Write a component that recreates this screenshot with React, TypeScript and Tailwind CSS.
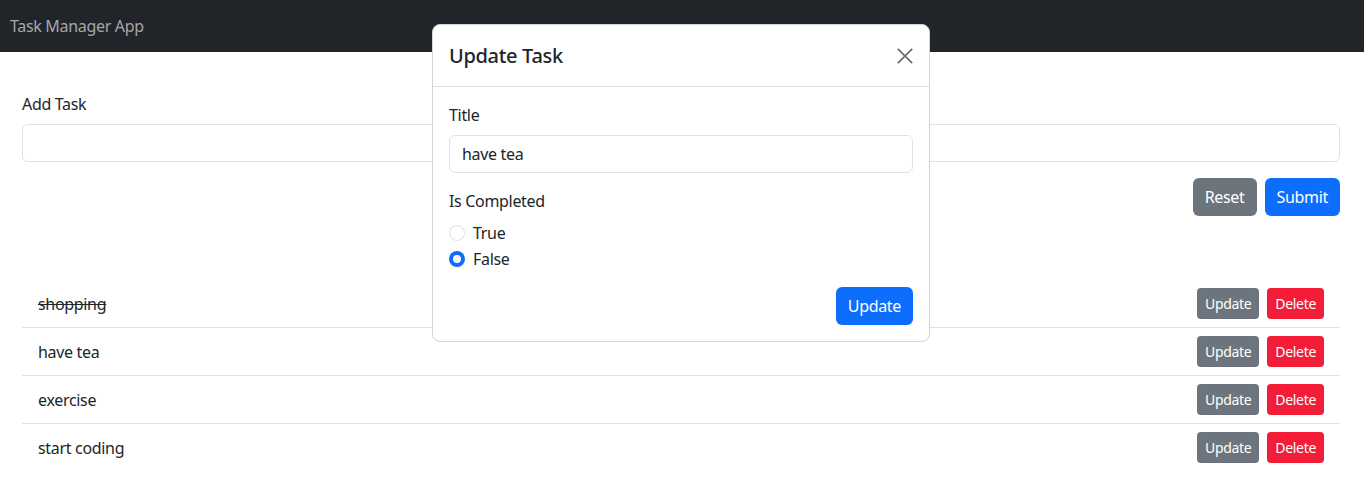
const font = { fontFamily: '"Noto Sans", "Open Sans", sans-serif' };

const tasks = [
  { title: "shopping", done: true },
  { title: "have tea", done: false },
  { title: "exercise", done: false },
  { title: "start coding", done: false },
];

function Radio({ checked, label }: { checked: boolean; label: string }) {
  return (
    <label className="flex h-6 items-center gap-2 text-[16px] text-[#212529]">
      {checked ? (
        <span className="flex h-4 w-4 items-center justify-center rounded-full bg-[#0d6efd]">
          <span className="h-2 w-2 rounded-full bg-white" />
        </span>
      ) : (
        <span className="h-4 w-4 rounded-full border border-[#dee2e6] bg-white" />
      )}
      {label}
    </label>
  );
}

function UpdateModal() {
  return (
    <div className="absolute left-[432px] top-[24px] w-[498px] rounded-lg border border-[#d3d4d6] bg-white">
      <div className="flex h-[62px] items-center justify-between border-b border-[#dee2e6] px-4">
        <h2 className="text-[20px] font-medium text-[#212529]">Update Task</h2>
        <button type="button" aria-label="Close" className="flex h-4 w-4 items-center justify-center">
          <svg viewBox="0 0 16 16" className="h-4 w-4" fill="none" stroke="#6b6e71" strokeWidth={1.7}>
            <path d="M0.8 0.8l14.4 14.4M15.2 0.8l-14.4 14.4" />
          </svg>
        </button>
      </div>
      <div className="p-4">
        <div className="mb-2 leading-6 text-[#212529]">Title</div>
        <input
          readOnly
          value="have tea"
          className="h-[38px] w-full rounded-md border border-[#dee2e6] px-3 text-[16px] text-[#212529] outline-none"
        />
        <div className="mt-4 mb-2 leading-6 text-[#212529]">Is Completed</div>
        <div className="flex flex-col gap-0.5">
          <Radio checked={false} label="True" />
          <Radio checked={true} label="False" />
        </div>
        <div className="mt-4 flex justify-end">
          <button type="button" className="h-[38px] rounded-md bg-[#0d6efd] px-3 text-[16px] text-white">
            Update
          </button>
        </div>
      </div>
    </div>
  );
}

export default function App() {
  return (
    <div className="relative min-h-[489px] bg-white text-[16px] tracking-[-0.02em] text-[#212529]" style={font}>
      <nav className="flex h-[52px] items-center bg-[#212529] px-[10px]">
        <span className="text-[16px] text-[#a5a7a9]">Task Manager App</span>
      </nav>

      <main className="pl-[22px] pr-[24px] pt-[40px]">
        <form onSubmit={(e) => e.preventDefault()}>
          <label className="mb-2 block leading-6">Add Task</label>
          <input className="h-[38px] w-full rounded-md border border-[#dee2e6] px-3 outline-none" />
          <div className="mt-4 flex justify-end gap-2">
            <button type="button" className="h-[38px] rounded-md bg-[#6c757d] px-3 text-white">
              Reset
            </button>
            <button type="submit" className="h-[38px] rounded-md bg-[#0d6efd] px-3 text-white">
              Submit
            </button>
          </div>
        </form>

        <ul className="mt-[64px]">
          {tasks.map((t, i) => (
            <li
              key={t.title}
              className={`flex items-center justify-between px-4 py-2 ${i < tasks.length - 1 ? "border-b border-[#dee2e6]" : ""}`}
            >
              <span className={t.done ? "line-through" : ""}>{t.title}</span>
              <div className="flex gap-2">
                <button type="button" className="h-[31px] rounded bg-[#6c757d] px-2 text-[14px] text-white">
                  Update
                </button>
                <button type="button" className="h-[31px] rounded bg-[#f31d38] px-2 text-[14px] text-white">
                  Delete
                </button>
              </div>
            </li>
          ))}
        </ul>
      </main>

      <UpdateModal />
    </div>
  );
}
